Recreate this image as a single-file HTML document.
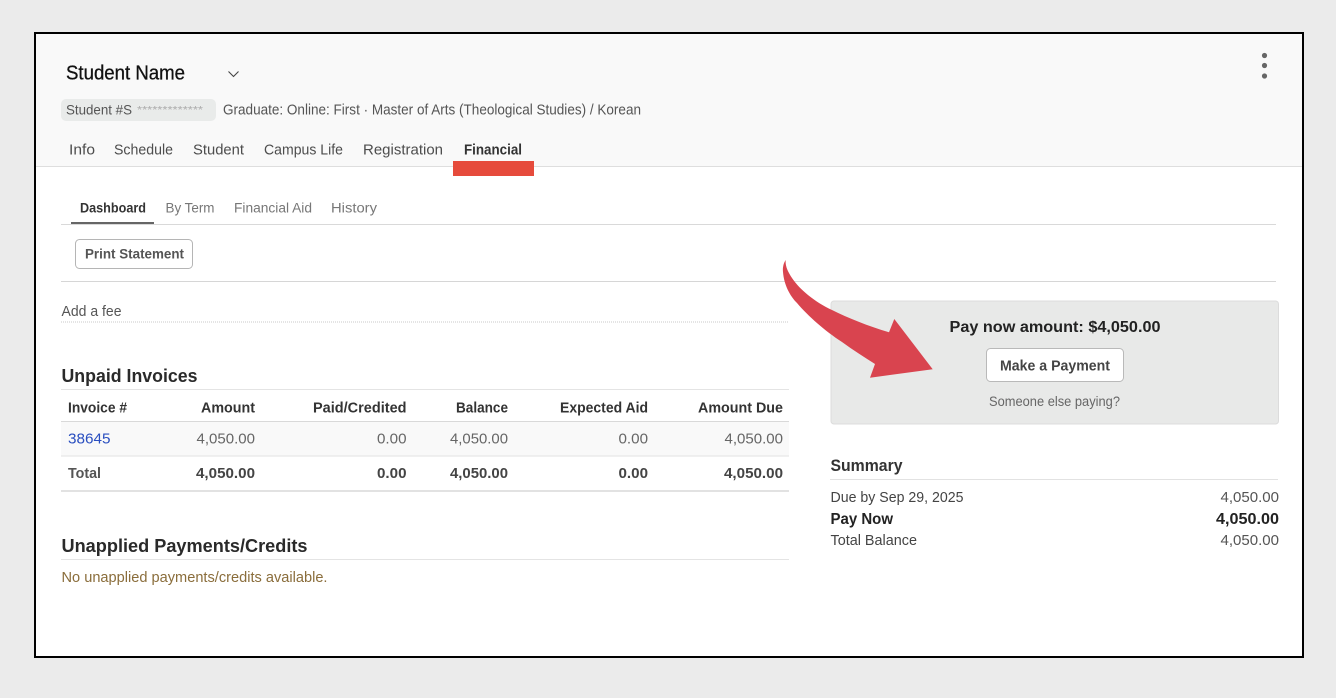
<!DOCTYPE html>
<html lang="en"><head><meta charset="utf-8"><title>Financial Dashboard</title>
<style>
html,body{margin:0;padding:0;width:1336px;height:698px;overflow:hidden;background:#ebebeb}
svg{display:block}
text{font-family:"Liberation Sans",sans-serif;font-size:14.5px;fill:#4d4d4d}
.b{font-weight:bold}
</style></head><body>
<svg width="1336" height="698" viewBox="0 0 1336 698" xmlns="http://www.w3.org/2000/svg">
<rect width="1336" height="698" fill="#ebebeb"/>
<rect x="35" y="33" width="1268" height="624" fill="#fff" stroke="#000" stroke-width="2"/>
<rect x="36" y="34" width="1266" height="132" fill="#f9f9f9"/>
<rect x="36" y="166" width="1266" height="1" fill="#dedede"/>

<text x="66" y="79.500" style="font-size:20px;fill:#111;stroke:#111;stroke-width:.3" textLength="119" lengthAdjust="spacingAndGlyphs">Student Name</text>
<path d="M228.500 71.500L233.500 76.500L238.500 71.500" fill="none" stroke="#444" stroke-width="1.100"/>
<circle cx="1264.500" cy="55.500" r="2.600" fill="#666"/><circle cx="1264.500" cy="65.500" r="2.600" fill="#666"/><circle cx="1264.500" cy="76" r="2.600" fill="#666"/>

<rect x="61" y="99" width="155" height="22" rx="5" fill="#e9ebea"/>
<text x="66" y="114.500" textLength="66" lengthAdjust="spacingAndGlyphs" style="font-size:14px;fill:#555">Student #S</text>
<text x="137" y="113" textLength="66" lengthAdjust="spacingAndGlyphs" style="font-size:10px;fill:#aaa">*************</text>
<text x="223" y="114.500" textLength="418" lengthAdjust="spacingAndGlyphs" style="font-size:14.5px;fill:#555">Graduate: Online: First · Master of Arts (Theological Studies) / Korean</text>

<text x="69" y="154.500" textLength="26" lengthAdjust="spacingAndGlyphs">Info</text>
<text x="114" y="154.500" textLength="59" lengthAdjust="spacingAndGlyphs">Schedule</text>
<text x="193" y="154.500" textLength="51" lengthAdjust="spacingAndGlyphs">Student</text>
<text x="264" y="154.500" textLength="79" lengthAdjust="spacingAndGlyphs">Campus Life</text>
<text x="363" y="154.500" textLength="80" lengthAdjust="spacingAndGlyphs">Registration</text>
<text x="464" y="154.500" textLength="58" lengthAdjust="spacingAndGlyphs" class="b" style="fill:#333">Financial</text>
<rect x="453" y="161" width="81" height="15" fill="#e64b3c"/>

<text x="80" y="212.500" textLength="66" lengthAdjust="spacingAndGlyphs" class="b" style="font-size:13.500px;fill:#333">Dashboard</text>
<text x="165.500" y="212.500" textLength="49" lengthAdjust="spacingAndGlyphs" style="font-size:13.500px;fill:#777">By Term</text>
<text x="234" y="212.500" textLength="78" lengthAdjust="spacingAndGlyphs" style="font-size:13.500px;fill:#777">Financial Aid</text>
<text x="331" y="212.500" textLength="46" lengthAdjust="spacingAndGlyphs" style="font-size:13.500px;fill:#777">History</text>
<rect x="61" y="224" width="1215" height="1" fill="#d9d9d9"/>
<rect x="71" y="222" width="83" height="2" fill="#666"/>

<rect x="75.500" y="239.500" width="117" height="29" rx="4" fill="#fff" stroke="#b5b5b5"/>
<text x="85" y="258.500" textLength="99" lengthAdjust="spacingAndGlyphs" class="b" style="font-size:13.500px;fill:#555">Print Statement</text>
<rect x="61" y="281" width="1215" height="1" fill="#d6d6d6"/>

<text x="61.500" y="316" textLength="60" lengthAdjust="spacingAndGlyphs" style="fill:#555">Add a fee</text>
<path d="M61 322H789" stroke="#c8c8c8" stroke-width="1" stroke-dasharray="1 1"/>

<text x="61.500" y="382" textLength="136" lengthAdjust="spacingAndGlyphs" class="b" style="font-size:18.500px;fill:#2a2a2a">Unpaid Invoices</text>
<rect x="61" y="389" width="728" height="1" fill="#e4e4e4"/>
<rect x="61" y="422" width="728" height="34" fill="#f9f9f9"/>
<rect x="61" y="421" width="728" height="1" fill="#d9d9d9"/>
<rect x="61" y="455.500" width="728" height="1" fill="#e2e2e2"/>
<rect x="61" y="490" width="728" height="2" fill="#e2e2e2"/>

<g style="font-weight:bold">
<text x="68" y="412.500" textLength="59" lengthAdjust="spacingAndGlyphs" style="fill:#333">Invoice #</text>
<text x="201" y="412.500" textLength="54" lengthAdjust="spacingAndGlyphs" style="fill:#333">Amount</text>
<text x="313" y="412.500" textLength="93.500" lengthAdjust="spacingAndGlyphs" style="fill:#333">Paid/Credited</text>
<text x="456" y="412.500" textLength="52" lengthAdjust="spacingAndGlyphs" style="fill:#333">Balance</text>
<text x="560" y="412.500" textLength="88" lengthAdjust="spacingAndGlyphs" style="fill:#333">Expected Aid</text>
<text x="698" y="412.500" textLength="85" lengthAdjust="spacingAndGlyphs" style="fill:#333">Amount Due</text>
</g>
<g style="font-size:15px">
<text x="68" y="443.500" textLength="42.500" lengthAdjust="spacingAndGlyphs" style="font-size:15px;fill:#2a4fc0">38645</text>
<text x="196.500" y="443.500" textLength="58.500" lengthAdjust="spacingAndGlyphs" style="font-size:15px;fill:#666">4,050.00</text>
<text x="377" y="443.500" textLength="29.500" lengthAdjust="spacingAndGlyphs" style="font-size:15px;fill:#666">0.00</text>
<text x="450" y="443.500" textLength="58" lengthAdjust="spacingAndGlyphs" style="font-size:15px;fill:#666">4,050.00</text>
<text x="618.500" y="443.500" textLength="29.500" lengthAdjust="spacingAndGlyphs" style="font-size:15px;fill:#666">0.00</text>
<text x="724.500" y="443.500" textLength="58.500" lengthAdjust="spacingAndGlyphs" style="font-size:15px;fill:#666">4,050.00</text>
</g>

<g style="font-weight:bold">
<text x="68" y="478" textLength="33" lengthAdjust="spacingAndGlyphs" style="fill:#555">Total</text>
<text x="196" y="478" textLength="59" lengthAdjust="spacingAndGlyphs" style="font-size:15px;fill:#444">4,050.00</text>
<text x="377" y="478" textLength="29.500" lengthAdjust="spacingAndGlyphs" style="font-size:15px;fill:#444">0.00</text>
<text x="450" y="478" textLength="58" lengthAdjust="spacingAndGlyphs" style="font-size:15px;fill:#444">4,050.00</text>
<text x="618.500" y="478" textLength="29.500" lengthAdjust="spacingAndGlyphs" style="font-size:15px;fill:#444">0.00</text>
<text x="724" y="478" textLength="59" lengthAdjust="spacingAndGlyphs" style="font-size:15px;fill:#444">4,050.00</text>
</g>

<text x="61.500" y="552" textLength="246" lengthAdjust="spacingAndGlyphs" class="b" style="font-size:18.500px;fill:#2a2a2a">Unapplied Payments/Credits</text>
<rect x="61" y="559" width="728" height="1" fill="#e4e4e4"/>
<text x="61.500" y="582" textLength="266" lengthAdjust="spacingAndGlyphs" style="fill:#8a6d3b">No unapplied payments/credits available.</text>

<rect x="831" y="301" width="447.500" height="123" rx="3" fill="#e8e9e8" stroke="#dcdcdc"/>
<text x="949.500" y="332" textLength="211" lengthAdjust="spacingAndGlyphs" class="b" style="font-size:16px;fill:#222">Pay now amount: $4,050.00</text>
<rect x="986.500" y="348.500" width="137" height="33" rx="4" fill="#fff" stroke="#b9b9b9"/>
<text x="1000" y="370.500" textLength="110" lengthAdjust="spacingAndGlyphs" class="b" style="font-size:14.500px;fill:#444">Make a Payment</text>
<text x="989" y="406" textLength="131" lengthAdjust="spacingAndGlyphs" style="font-size:13.500px;fill:#666">Someone else paying?</text>

<text x="830.500" y="471" textLength="72" lengthAdjust="spacingAndGlyphs" class="b" style="font-size:16.500px;fill:#333">Summary</text>
<rect x="830" y="479" width="448" height="1" fill="#e2e2e2"/>
<text x="830.500" y="502" textLength="133" lengthAdjust="spacingAndGlyphs" style="fill:#444">Due by Sep 29, 2025</text>
<text x="1220.500" y="502" textLength="58.500" lengthAdjust="spacingAndGlyphs" style="font-size:15px;fill:#555">4,050.00</text>
<text x="830.500" y="524" textLength="62.500" lengthAdjust="spacingAndGlyphs" class="b" style="font-size:15.500px;fill:#222">Pay Now</text>
<text x="1216" y="524" textLength="63" lengthAdjust="spacingAndGlyphs" class="b" style="font-size:16px;fill:#222">4,050.00</text>
<text x="830.500" y="545" textLength="86.500" lengthAdjust="spacingAndGlyphs" style="fill:#444">Total Balance</text>
<text x="1220.500" y="545" textLength="58.500" lengthAdjust="spacingAndGlyphs" style="font-size:15px;fill:#555">4,050.00</text>

<path d="M785.700 260C783.500 263 782.500 268 783 272C784 285 790 296 797 303C808 316 825 331 842 342C853 350 864 357 875 364L870 377.700L932.700 369.300L894.300 319L889 332.300C868 326 848 318 832 310C815 302 800 290 792 278C788 272 785 266 785.700 260Z" fill="#d9444f"/>
</svg>
</body></html>
